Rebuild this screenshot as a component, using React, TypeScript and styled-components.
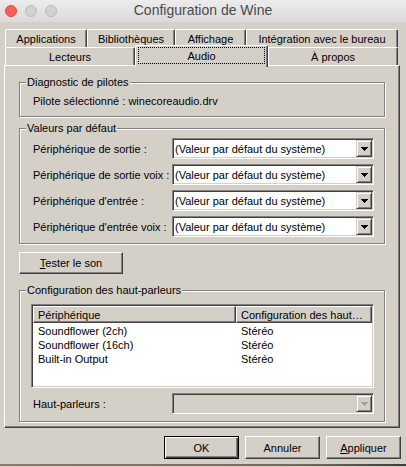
import React from 'react';
import styled, { createGlobalStyle } from 'styled-components';

const face = '#d4d0c8';
const shadow = '#808080';
const dark = '#404040';

const GlobalStyle = createGlobalStyle`
  html, body { margin: 0; padding: 0; background: ${face}; }
  body {
    font-family: "Liberation Sans", Arial, sans-serif;
    font-size: 11px;
    color: #000;
  }
`;

const Window = styled.div`
  width: 406px;
  height: 467px;
  display: flex;
  flex-direction: column;
  background: ${face};
  overflow: hidden;
`;

/* ---------- macOS title bar ---------- */
const TitleBar = styled.div`
  flex: none;
  height: 22px;
  box-sizing: border-box;
  padding: 0 5px;
  display: grid;
  grid-template-columns: 1fr auto 1fr;
  align-items: center;
  background: linear-gradient(#ececec, #dadada);
`;

const Lights = styled.div`
  display: flex;
  gap: 8px;
  align-items: center;
  margin-top: -1px;
`;

const Light = styled.span<{ $fill: string; $rim: string }>`
  width: 12px;
  height: 12px;
  box-sizing: border-box;
  border-radius: 50%;
  background: ${p => p.$fill};
  border: 1px solid ${p => p.$rim};
`;

const Title = styled.div`
  font-family: "Liberation Sans", Arial, sans-serif;
  font-size: 14px;
  color: #4b4b4b;
  margin-top: -2px;
  white-space: nowrap;
`;

/* ---------- dialog body ---------- */
const Body = styled.div`
  flex: 1;
  display: flex;
  flex-direction: column;
  padding: 7px 0 0 4px;
`;

const TabStrip = styled.div`
  display: flex;
  flex-direction: column;
  padding-left: 1px;
`;

const TabRow = styled.div`
  display: flex;
  height: 18px;
  align-items: flex-start;
`;

const Tab = styled.div<{ $w: number; $active?: boolean }>`
  position: relative;
  z-index: ${p => (p.$active ? 2 : 0)};
  width: ${p => p.$w}px;
  height: ${p => (p.$active ? 22 : 18)}px;
  margin-top: ${p => (p.$active ? -2 : 0)}px;
  box-sizing: border-box;
  background: ${face};
  border-top: 1px solid #fff;
  border-left: 1px solid #fff;
  border-right: 1px solid ${dark};
  box-shadow: inset -1px 0 ${shadow};
  border-radius: 2px 2px 0 0;
  display: flex;
  align-items: ${p => (p.$active ? 'stretch' : 'center')};
  justify-content: center;
  white-space: nowrap;
`;

const FocusRing = styled.span`
  flex: 1;
  margin: 1px 2px 3px 2px;
  border: 1px dotted #000;
  display: flex;
  align-items: center;
  justify-content: center;
`;

const Panel = styled.div`
  position: relative;
  z-index: 1;
  width: 396px;
  box-sizing: border-box;
  border: 1px solid;
  border-color: #fff ${dark} ${dark} #fff;
  box-shadow: inset -1px -1px ${shadow};
  padding: 16px 14px 5px 14px;
  display: flex;
  flex-direction: column;
`;

const GroupBox = styled.div<{ $gap?: number }>`
  position: relative;
  margin-top: ${p => p.$gap ?? 0}px;
  border: 1px solid ${shadow};
  box-shadow: inset 1px 1px #fff, 1px 1px #fff;
`;

const Legend = styled.span`
  position: absolute;
  top: -7px;
  left: 6px;
  padding: 0 1px;
  line-height: 13px;
  background: ${face};
  white-space: nowrap;
`;

const InfoLine = styled.div`
  padding: 12px 0 8px 13px;
  line-height: 13px;
`;

const FormGrid = styled.div`
  display: grid;
  grid-template-columns: 139px 202px;
  grid-auto-rows: 21px;
  row-gap: 5px;
  align-items: center;
  padding: 9px 10px 6px 13px;
`;

const FieldLabel = styled.span`
  white-space: nowrap;
`;

const Combo = styled.div<{ $disabled?: boolean }>`
  height: 21px;
  box-sizing: border-box;
  display: flex;
  padding: 1px;
  background: ${p => (p.$disabled ? face : '#fff')};
  border: 1px solid;
  border-color: ${shadow} #fff #fff ${shadow};
  box-shadow: inset 1px 1px ${dark}, inset -1px -1px ${face};
`;

const ComboValue = styled.span`
  flex: 1;
  padding-left: 1px;
  display: flex;
  align-items: center;
  white-space: nowrap;
  overflow: hidden;
`;

const DropButton = styled.span`
  flex: none;
  width: 16px;
  box-sizing: border-box;
  background: ${face};
  border: 1px solid;
  border-color: ${face} ${dark} ${dark} ${face};
  box-shadow: inset 1px 1px #fff, inset -1px -1px ${shadow};
  display: flex;
  align-items: center;
  justify-content: center;
`;

const PushButton = styled.button<{ $w: number; $h: number; $default?: boolean }>`
  flex: none;
  align-self: flex-start;
  width: ${p => p.$w}px;
  height: ${p => p.$h}px;
  box-sizing: border-box;
  margin: 0;
  padding: 0;
  font: inherit;
  color: #000;
  background: ${face};
  border: 1px solid;
  border-color: ${p => (p.$default ? '#000' : `#fff ${dark} ${dark} #fff`)};
  box-shadow: ${p =>
    p.$default
      ? `inset 1px 1px #fff, inset -1px -1px ${dark}, inset -2px -2px ${shadow}`
      : `inset -1px -1px ${shadow}`};
  display: flex;
  align-items: center;
  justify-content: center;
`;

const TestButton = styled(PushButton)`
  margin-top: 8px;
`;

const SpeakerBody = styled.div`
  padding: 13px 0 7px 11px;
  display: flex;
  flex-direction: column;
`;

const ListView = styled.div`
  width: 343px;
  height: 84px;
  box-sizing: border-box;
  padding: 1px;
  background: #fff;
  border: 1px solid;
  border-color: ${shadow} #fff #fff ${shadow};
  box-shadow: inset 1px 1px ${dark}, inset -1px -1px ${face};
`;

const ListHeader = styled.div`
  display: grid;
  grid-template-columns: 203px 136px;
  height: 17px;
`;

const HeaderCell = styled.div`
  box-sizing: border-box;
  background: ${face};
  border: 1px solid;
  border-color: #fff ${dark} ${dark} #fff;
  box-shadow: inset -1px -1px ${shadow};
  padding-left: 4px;
  display: flex;
  align-items: center;
  white-space: nowrap;
  overflow: hidden;
`;

const ListRow = styled.div<{ $first?: boolean }>`
  display: grid;
  grid-template-columns: 203px 136px;
  height: 14px;
  margin-top: ${p => (p.$first ? 1 : 0)}px;
  align-items: center;
`;

const ListCell = styled.span`
  padding-left: 5px;
  white-space: nowrap;
`;

const SpeakerRow = styled.div`
  display: grid;
  grid-template-columns: 141px 202px;
  align-items: center;
  margin-top: 5px;
`;

const SpeakerLabel = styled.span`
  padding-left: 2px;
`;

const ButtonBar = styled.div`
  display: flex;
  justify-content: flex-end;
  gap: 6px;
  margin-top: 8px;
  padding-right: 5px;
`;

const WindowEdge = styled.div`
  margin-top: auto;
  margin-bottom: 1px;
  margin-left: -4px;
  height: 2px;
  background: linear-gradient(to right, #8d7a66, #7a6856 75%, #3c3c3c);
`;

const Arrow = ({ disabled }: { disabled?: boolean }) => (
  <svg width="7" height="4" viewBox="0 0 7 4" shapeRendering="crispEdges">
    <path
      d="M0 0h7v1h-1v1h-1v1h-1v1h-1v-1h-1v-1h-1v-1h-1z"
      fill={disabled ? '#a0a0a0' : '#000'}
    />
  </svg>
);

const deviceFields = [
  'Périphérique de sortie :',
  'Périphérique de sortie voix :',
  "Périphérique d'entrée :",
  "Périphérique d'entrée voix :",
];

const speakers = [
  { name: 'Soundflower (2ch)', config: 'Stéréo' },
  { name: 'Soundflower (16ch)', config: 'Stéréo' },
  { name: 'Built-in Output', config: 'Stéréo' },
];

export default function App() {
  return (
    <>
      <GlobalStyle />
      <Window>
        <TitleBar>
          <Lights>
            <Light $fill="#fc5f57" $rim="#de4842" />
            <Light $fill="#d1d1d1" $rim="#bcbcbc" />
            <Light $fill="#d1d1d1" $rim="#bcbcbc" />
          </Lights>
          <Title>Configuration de Wine</Title>
          <span />
        </TitleBar>

        <Body>
          <TabStrip>
            <TabRow>
              <Tab $w={82}>Applications</Tab>
              <Tab $w={88}>Bibliothèques</Tab>
              <Tab $w={71}>Affichage</Tab>
              <Tab $w={152}>Intégration avec le bureau</Tab>
            </TabRow>
            <TabRow>
              <Tab $w={130}>Lecteurs</Tab>
              <Tab $w={133} $active>
                <FocusRing>Audio</FocusRing>
              </Tab>
              <Tab $w={130}>À propos</Tab>
            </TabRow>
          </TabStrip>

          <Panel>
            <GroupBox>
              <Legend>Diagnostic de pilotes</Legend>
              <InfoLine>Pilote sélectionné : winecoreaudio.drv</InfoLine>
            </GroupBox>

            <GroupBox $gap={11}>
              <Legend>Valeurs par défaut</Legend>
              <FormGrid>
                {deviceFields.map(label => (
                  <React.Fragment key={label}>
                    <FieldLabel>{label}</FieldLabel>
                    <Combo>
                      <ComboValue>(Valeur par défaut du système)</ComboValue>
                      <DropButton>
                        <Arrow />
                      </DropButton>
                    </Combo>
                  </React.Fragment>
                ))}
              </FormGrid>
            </GroupBox>

            <TestButton $w={104} $h={22}>
              <span>
                <u>T</u>ester le son
              </span>
            </TestButton>

            <GroupBox $gap={16}>
              <Legend>Configuration des haut-parleurs</Legend>
              <SpeakerBody>
                <ListView>
                  <ListHeader>
                    <HeaderCell>Périphérique</HeaderCell>
                    <HeaderCell>Configuration des haut…</HeaderCell>
                  </ListHeader>
                  {speakers.map((s, i) => (
                    <ListRow key={s.name} $first={i === 0}>
                      <ListCell>{s.name}</ListCell>
                      <ListCell>{s.config}</ListCell>
                    </ListRow>
                  ))}
                </ListView>
                <SpeakerRow>
                  <SpeakerLabel>Haut-parleurs :</SpeakerLabel>
                  <Combo $disabled>
                    <ComboValue />
                    <DropButton>
                      <Arrow disabled />
                    </DropButton>
                  </Combo>
                </SpeakerRow>
              </SpeakerBody>
            </GroupBox>
          </Panel>

          <ButtonBar>
            <PushButton $w={75} $h={23} $default>OK</PushButton>
            <PushButton $w={75} $h={23}>Annuler</PushButton>
            <PushButton $w={75} $h={23}>
              <span>
                <u>A</u>ppliquer
              </span>
            </PushButton>
          </ButtonBar>

          <WindowEdge />
        </Body>
      </Window>
    </>
  );
}
